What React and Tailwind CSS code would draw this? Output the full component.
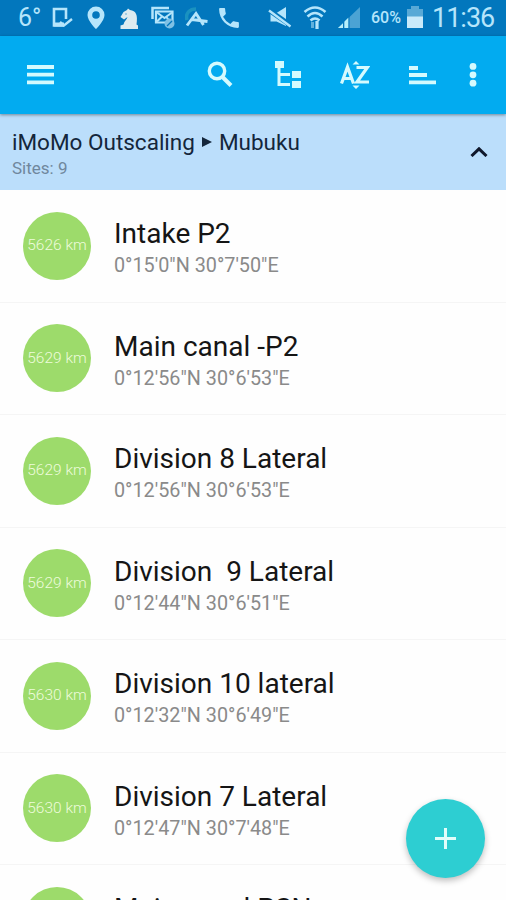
import React from 'react';

const SITES = [
  { name: 'Intake P2', coords: '0°15\'0"N 30°7\'50"E', distance: '5626 km' },
  { name: 'Main canal -P2', coords: '0°12\'56"N 30°6\'53"E', distance: '5629 km' },
  { name: 'Division 8 Lateral', coords: '0°12\'56"N 30°6\'53"E', distance: '5629 km' },
  { name: 'Division  9 Lateral', coords: '0°12\'44"N 30°6\'51"E', distance: '5629 km' },
  { name: 'Division 10 lateral', coords: '0°12\'32"N 30°6\'49"E', distance: '5630 km' },
  { name: 'Division 7 Lateral', coords: '0°12\'47"N 30°7\'48"E', distance: '5630 km' },
  { name: 'Main canal PSN', coords: '0°12\'47"N 30°7\'48"E', distance: '5630 km' },
];

function StatusBar() {
  return (
    <div className="flex h-9 shrink-0 items-center bg-[#0277bd] text-[#b5e5fb]">
      <span className="ml-[18px] w-[33px] text-[25px] leading-9">6°</span>
      {/* phone with check */}
      <svg className="h-6 w-[22px] shrink-0" viewBox="0 0 22 24" fill="none" stroke="currentColor">
        <path d="M15 13V3H3v16.500h10" strokeWidth="2.600" />
        <path d="M3 18.500h10" strokeWidth="4" />
        <path d="M9 16l4 3.500 8-6.500" strokeWidth="2.400" />
      </svg>
      {/* location pin */}
      <svg className="ml-[13px] h-6 w-5" viewBox="0 0 20 24" fill="currentColor">
        <path fillRule="evenodd" d="M10 .5a8.500 8.500 0 0 0-8.500 8.500c0 6 8.500 14 8.500 14s8.500-8 8.500-14A8.500 8.500 0 0 0 10 .5zm0 4.700a3.800 3.800 0 1 1 0 7.600 3.800 3.800 0 0 1 0-7.600z" />
      </svg>
      {/* chess knight */}
      <svg className="ml-[13px] h-6 w-5" viewBox="0 0 20 24" fill="#dcebf0">
        <path d="M1.500 23v-3.500l3-1C5 15 8 13.500 8.500 11L5 13.500 1.500 11l3-5L8 4l1-1.500L11 4c6 .5 8 5 6.500 14.500l1.500 1V23z" />
        <circle cx="7" cy="8" r=".8" fill="#5ba5cf" />
      </svg>
      {/* mail stack */}
      <svg className="ml-3 h-6 w-6" viewBox="0 0 24 24" fill="none" stroke="currentColor">
        <path d="M1.500 13V2H18" strokeWidth="2.500" />
        <path d="M5 5.500h16.500v11H5z" strokeWidth="2.200" />
        <path d="M6 6.500l7.500 5.500L21 6.500M6 15.500l5-5M15 10.500l3 4" strokeWidth="2" />
        <circle cx="18.500" cy="17.500" r="5" fill="#7fc1e5" stroke="none" />
        <path d="M16 20l5-5" stroke="#0277bd" strokeWidth="1.300" />
      </svg>
      {/* navigation app */}
      <svg className="ml-[10px] h-6 w-6" viewBox="0 0 24 24" fill="none">
        <path d="M2 14C0 7 5 3 11 3" stroke="#1a92c0" strokeWidth="3.500" />
        <path d="M2 19.500L11 7.500l7.500 11.500M7 13.500l15.500 2" stroke="currentColor" strokeWidth="2.900" />
      </svg>
      {/* call */}
      <svg className="ml-[9px] h-6 w-[22px]" viewBox="2 2 20 20" fill="currentColor">
        <path d="M6.600 10.800a15.500 15.500 0 0 0 6.600 6.600l2.200-2.200c.3-.3.7-.4 1-.2 1.200.4 2.400.6 3.600.6.6 0 1 .4 1 1V20c0 .6-.4 1-1 1C10.600 21 3 13.400 3 4c0-.6.4-1 1-1h3.500c.6 0 1 .4 1 1 0 1.200.2 2.400.6 3.600.1.300 0 .700-.200 1z" />
      </svg>
      {/* muted */}
      <svg className="ml-[28px] h-6 w-6" viewBox="0 0 24 24" fill="currentColor">
        <path d="M2.500 7h6L18 1v19l-9.500-4.500h-6z" />
        <path d="M0 3.500l23 16" stroke="#0277bd" strokeWidth="5" />
        <path d="M1 4.500l21.500 16" stroke="currentColor" strokeWidth="2.400" />
      </svg>
      {/* wifi */}
      <svg className="ml-[11px] h-6 w-6" viewBox="0 0 24 24" fill="none" stroke="currentColor" strokeWidth="2.600">
        <path d="M1.500 6q10.500-9 21 0M4.500 10.500q7.500-7 15 0M7.500 14.500q4.500-4 9 0" />
        <path d="M9.500 16v6" stroke="#62b1dc" strokeWidth="3" />
        <path d="M14 15v8" strokeWidth="3.200" />
      </svg>
      {/* cell signal */}
      <svg className="ml-[10px] h-6 w-6" viewBox="0 0 24 24">
        <path d="M1 22L23 1v21z" fill="#4ba3d4" />
        <path d="M1 22l5-4.700V22zM7.500 22v-6.600l4-3.800V22z" fill="#b5f0fb" />
        <path d="M6.500 15v8M12 9v14" stroke="#0277bd" strokeWidth="1" />
      </svg>
      <span className="ml-[10px] w-9 text-[16px] leading-9 font-medium">60%</span>
      {/* battery */}
      <svg className="h-6 w-4" viewBox="0 0 16 24">
        <path d="M4 0h8v3h4v8H0V3h4z" fill="#58a9d6" />
        <path d="M0 10.500h16V22H0z" fill="#c9eafa" />
      </svg>
      <span className="ml-[9px] text-[27px] leading-9 tracking-[-1px]">11:36</span>
    </div>
  );
}

function Toolbar() {
  return (
    <div className="z-10 flex h-[78px] shrink-0 items-center bg-[#02abf0] text-[#d4fafe] shadow-[0_1px_3px_rgba(0,0,0,0.4)]">
      {/* menu */}
      <svg className="ml-[27px] h-5 w-[27px]" viewBox="0 0 27 20" stroke="currentColor" strokeWidth="3.800">
        <path d="M0 2h27M0 9.700h27M0 17.400h27" />
      </svg>
      {/* search */}
      <svg className="ml-[152px] h-7 w-7" viewBox="0 0 28 28" fill="none" stroke="currentColor">
        <circle cx="11" cy="10" r="7.700" strokeWidth="3.400" />
        <path d="M16 15.500l9 9" strokeWidth="4" />
      </svg>
      {/* tree view */}
      <svg className="ml-10 h-7 w-7" viewBox="0 0 28 28" fill="currentColor">
        <path d="M1 0h9v7H1zM18 10h9v7h-9zM18 20h9v7h-9z" />
        <path d="M5 7v16.500h11M5 13.500h11" fill="none" stroke="currentColor" strokeWidth="3" />
      </svg>
      {/* sort by name */}
      <svg className="ml-[38px] h-7 w-[30px]" viewBox="0 0 30 28" fill="none" stroke="currentColor" strokeWidth="3.200">
        <path d="M1.500 22.500L7.500 6l6 16.500M3.500 17.500h8" />
        <path d="M16.500 6.500h10.800L17 21h12" />
        <path d="M12.500 3.500L16 0l3.500 3.500zM12.500 24.500L16 28l3.500-3.500z" fill="currentColor" stroke="none" />
      </svg>
      {/* sort by distance */}
      <svg className="ml-[39px] h-5 w-[27px]" viewBox="0 0 27 20" stroke="currentColor" strokeWidth="3.800">
        <path d="M0 3h9M0 10h18M0 17.300h27" />
      </svg>
      {/* overflow */}
      <svg className="ml-[33px] h-6 w-2" viewBox="0 0 8 24" fill="currentColor">
        <circle cx="4" cy="3.400" r="3.400" />
        <circle cx="4" cy="11.800" r="3.400" />
        <circle cx="4" cy="20.200" r="3.400" />
      </svg>
    </div>
  );
}

function SiteRow({ site }) {
  return (
    <div className="flex h-[112.5px] shrink-0 items-center border-b border-[#f5f5f5] pl-[23px]">
      <div className="flex size-[68px] items-center justify-center rounded-full bg-[#9ddb6b] text-[15.5px] font-light whitespace-nowrap text-[#eefbdc]">
        {site.distance}
      </div>
      <div className="ml-[23px] pt-[5px] whitespace-pre">
        <div className="text-[28px] leading-9 text-[#151515]">{site.name}</div>
        <div className="text-[19.8px] leading-7 text-[#8a8a8a]">{site.coords}</div>
      </div>
    </div>
  );
}

export default function App() {
  return (
    <div className="relative flex h-[900px] w-[506px] flex-col overflow-hidden bg-[#fefefe] font-[Roboto,sans-serif]">
      <StatusBar />
      <Toolbar />
      <div className="flex h-[76px] shrink-0 items-center justify-between bg-[#bbdefb] pr-[18px] pl-3">
        <div className="pt-1">
          <div className="flex items-center text-[22.5px] leading-7 text-[#14263b]">
            <span>iMoMo Outscaling</span>
            <svg className="mx-[7px] h-[10px] w-[10px]" viewBox="0 0 10 10" fill="currentColor">
              <path d="M0 0l10 5-10 5z" />
            </svg>
            <span>Mubuku</span>
          </div>
          <div className="text-[17px] leading-6 text-[#70879d]">Sites: 9</div>
        </div>
        <svg className="h-[10px] w-[18px]" viewBox="0 0 18 10" fill="none" stroke="#10182b" strokeWidth="3">
          <path d="M1.500 9L9 1.800 16.500 9" />
        </svg>
      </div>
      {SITES.map((site) => (
        <SiteRow key={site.name} site={site} />
      ))}
      {/* floating add button */}
      <button className="absolute right-[21px] bottom-[22px] flex size-[79px] items-center justify-center rounded-full bg-[#2dced2] shadow-[0_3px_6px_rgba(0,0,0,0.25)]">
        <svg className="size-[21px]" viewBox="0 0 21 21" stroke="#e2fdfa" strokeWidth="3">
          <path d="M10.500 0v21M0 10.500h21" />
        </svg>
      </button>
    </div>
  );
}
